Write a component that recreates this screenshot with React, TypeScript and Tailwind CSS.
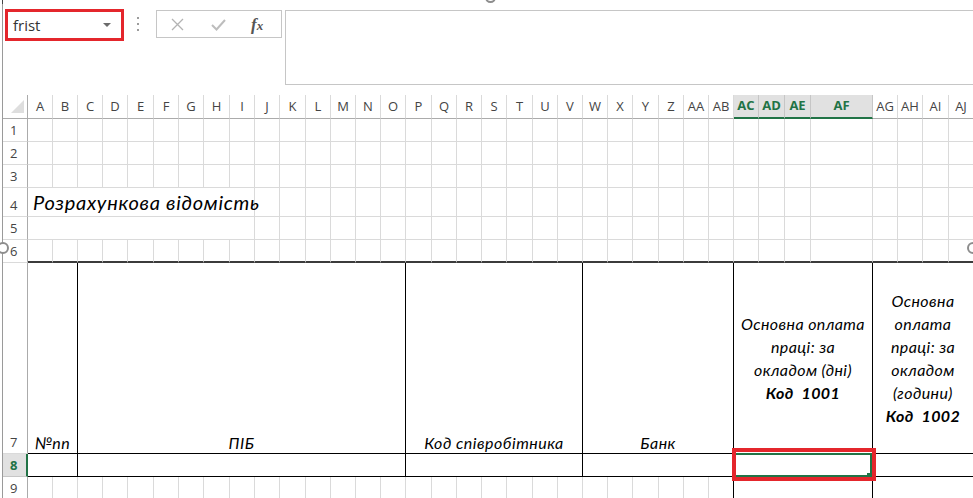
import React from 'react';

// row header + columns A..AJ
const GRID =
  'grid grid-cols-[25px_25px_25px_25px_25px_26px_25px_25px_26px_25px_25px_26px_25px_25px_25px_25px_26px_25px_25px_25px_26px_25px_25px_25px_25px_26px_25px_25px_25px_25px_26px_26px_62px_25px_25px_26px_25px]';

const LETTERS = [
  'A', 'B', 'C', 'D', 'E', 'F', 'G', 'H', 'I', 'J', 'K', 'L', 'M', 'N', 'O', 'P', 'Q', 'R',
  'S', 'T', 'U', 'V', 'W', 'X', 'Y', 'Z', 'AA', 'AB', 'AC', 'AD', 'AE', 'AF', 'AG', 'AH', 'AI', 'AJ',
];
const SELECTED = ['AC', 'AD', 'AE', 'AF'];

const NORMAL = 'border-r border-b border-[#dadada]';
const BLACK = 'border-r border-b border-black';
const CELL_FONT = "font-['Lato','Open_Sans',sans-serif] italic text-black";

const RowHead: React.FC<{ n: string; active?: boolean }> = ({ n, active }) =>
  active ? (
    <div className="flex items-end border-r-2 border-b border-r-[#217346] border-b-[#c6c6c6] bg-[#e1e1e1] pb-[2px] pl-[7px] text-[13px] leading-[17px] font-bold text-[#217346]">
      {n}
    </div>
  ) : (
    <div className="flex items-end border-r border-b border-r-[#ababab] border-b-[#dadada] pb-[2px] pl-[7px] text-[13px] leading-[17px] text-[#444]">
      {n}
    </div>
  );

const Row: React.FC<{ n: string; h: string; active?: boolean; children: React.ReactNode }> = ({
  n,
  h,
  active,
  children,
}) => (
  <div className={`${GRID} ${h}`}>
    <RowHead n={n} active={active} />
    {children}
  </div>
);

const plain = (from = 0, to = LETTERS.length) =>
  LETTERS.slice(from, to).map((l) => <div key={l} className={NORMAL} />);

const TopBar: React.FC = () => (
  <div className="flex h-[95px] items-start pl-[2px] pt-[9px]">
    <div className="flex h-[32px] w-[119px] items-center justify-between border-[3px] border-[#e4262c] pl-[5px] pr-[10px]">
      <span className="text-[15px] leading-none text-[#333]">frist</span>
      <svg width="8" height="4" viewBox="0 0 8 4">
        <path d="M0 0h8L4 4z" fill="#6b6b6b" />
      </svg>
    </div>

    <div className="ml-[13px] mt-[8px] flex flex-col gap-[4px]">
      <span className="h-[2px] w-[2px] bg-[#9c9c9c]" />
      <span className="h-[2px] w-[2px] bg-[#9c9c9c]" />
      <span className="h-[2px] w-[2px] bg-[#9c9c9c]" />
    </div>

    <div className="ml-[17px] mt-[1px] flex h-[28px] w-[126px] items-center border border-[#c6c6c6]">
      <svg className="ml-[14px]" width="13" height="13" viewBox="0 0 13 13">
        <path d="M1 1l11 11M12 1L1 12" stroke="#b3b3b3" strokeWidth="1.3" fill="none" />
      </svg>
      <svg className="ml-[27px] mt-[2px]" width="15" height="12" viewBox="0 0 15 12">
        <path d="M1 6l4.5 4.5L14 1" stroke="#bdbdbd" strokeWidth="2" fill="none" />
      </svg>
      <span className="ml-[25px] font-['Liberation_Serif',serif] text-[17px] font-bold italic leading-none text-[#555]">
        f<span className="text-[13px]">x</span>
      </span>
    </div>

    <div className="ml-[3px] mt-[1px] h-[75px] flex-1 border border-r-0 border-[#c6c6c6]" />
  </div>
);

const HeaderRow: React.FC = () => (
  <div className={`${GRID} h-[24px]`}>
    <div className="relative border-r border-b border-[#ababab]">
      <svg className="absolute left-0 top-0" width="24" height="23" viewBox="0 0 24 23">
        <path d="M21 5v13H8z" fill="#dedede" />
      </svg>
    </div>
    {LETTERS.map((l) =>
      SELECTED.includes(l) ? (
        <div
          key={l}
          className="flex items-center justify-center border-r border-b-2 border-r-[#c6c6c6] border-b-[#217346] bg-[#e1e1e1] text-[13px] font-bold text-[#217346]"
        >
          {l}
        </div>
      ) : (
        <div
          key={l}
          className="flex items-center justify-center border-r border-b border-r-[#dadada] border-b-[#ababab] text-[13px] text-[#444]"
        >
          {l}
        </div>
      ),
    )}
  </div>
);

const Label: React.FC<{ span: string; children: React.ReactNode }> = ({ span, children }) => (
  <div
    className={`${span} ${BLACK} ${CELL_FONT} flex items-end justify-center pb-[2px] text-[16px] leading-[17px] tracking-[0.5px]`}
  >
    {children}
  </div>
);

const Sheet: React.FC = () => (
  <div>
    <HeaderRow />
    <Row n="1" h="h-[23px]">{plain()}</Row>
    <Row n="2" h="h-[23px]">{plain()}</Row>
    <Row n="3" h="h-[23px]">{plain()}</Row>
    <Row n="4" h="h-[29px]">
      <div className={`col-span-9 ${NORMAL} flex items-end pb-[2px] pl-[5px]`}>
        <span className={`${CELL_FONT} whitespace-nowrap text-[20px] leading-[23px] tracking-[0.7px]`}>
          Розрахункова відомість
        </span>
      </div>
      {plain(9)}
    </Row>
    <Row n="5" h="h-[23px]">
      <div className={`col-span-9 ${NORMAL}`} />
      {plain(9)}
    </Row>
    <Row n="6" h="h-[23px]">
      {LETTERS.map((l) => (
        <div key={l} className="border-r border-b-2 border-r-[#dadada] border-b-[#3b3b3b]" />
      ))}
    </Row>
    <Row n="7" h="h-[191px]">
      <Label span="col-span-2">№пп</Label>
      <Label span="col-span-13">ПІБ</Label>
      <Label span="col-span-7">Код співробітника</Label>
      <Label span="col-span-6">Банк</Label>
      <div
        className={`col-span-4 ${BLACK} ${CELL_FONT} flex flex-col items-center justify-center text-[16px] leading-[23px] tracking-[0.4px]`}
      >
        <span>Основна оплата</span>
        <span>праці: за</span>
        <span>окладом (дні)</span>
        <span className="whitespace-pre font-bold">Код  1001</span>
      </div>
      <div
        className={`col-span-4 ${BLACK} ${CELL_FONT} flex flex-col items-center justify-center text-[16px] leading-[23px] tracking-[0.4px]`}
      >
        <span>Основна</span>
        <span>оплата</span>
        <span>праці: за</span>
        <span>окладом</span>
        <span>(години)</span>
        <span className="whitespace-pre font-bold">Код  1002</span>
      </div>
    </Row>
    <Row n="8" h="h-[23px]" active>
      <div className={`col-span-2 ${BLACK}`} />
      <div className={`col-span-13 ${BLACK}`} />
      <div className={`col-span-7 ${BLACK}`} />
      <div className={`col-span-6 ${BLACK}`} />
      <div className={`relative col-span-4 ${BLACK}`}>
        {/* active cell */}
        <div className="absolute -left-[1px] -top-[1px] -bottom-[1px] right-0 border-2 border-[#217346]" />
        <div className="absolute -bottom-[2px] right-0 h-[5px] w-[5px] bg-[#217346]" />
        {/* annotation */}
        <div className="absolute -left-[2px] -top-[6px] -right-[4px] -bottom-[5px] border-4 border-[#e4262c]" />
      </div>
      <div className={`col-span-4 ${BLACK}`} />
    </Row>
    <Row n="9" h="h-[23px]">
      {plain(0, 27)}
      <div className="border-r border-b border-r-black border-b-[#dadada]" />
      <div className="col-span-4 border-r border-b border-r-black border-b-[#dadada]" />
      <div className={`col-span-4 ${NORMAL}`} />
    </Row>
  </div>
);

export default function App() {
  return (
    <div className="relative h-[498px] w-[973px] overflow-hidden bg-white font-['Open_Sans','Noto_Sans',sans-serif]">
      <div className="ml-[2px] h-full border-l border-[#9a9a9a]">
        <TopBar />
        <Sheet />
      </div>
      {/* picture resize handles */}
      <span className="absolute left-[2px] top-0 h-[4px] w-[1px] bg-[#444]" />
      <span className="absolute left-[485px] top-[-8px] h-[11px] w-[11px] rounded-full border-2 border-[#8d8d8d] bg-white" />
      <span className="absolute left-[-3px] top-[242px] h-[12px] w-[12px] rounded-full border-2 border-[#8d8d8d] bg-white" />
      <span className="absolute left-[967px] top-[242px] h-[12px] w-[12px] rounded-full border-2 border-[#8d8d8d] bg-white" />
    </div>
  );
}
